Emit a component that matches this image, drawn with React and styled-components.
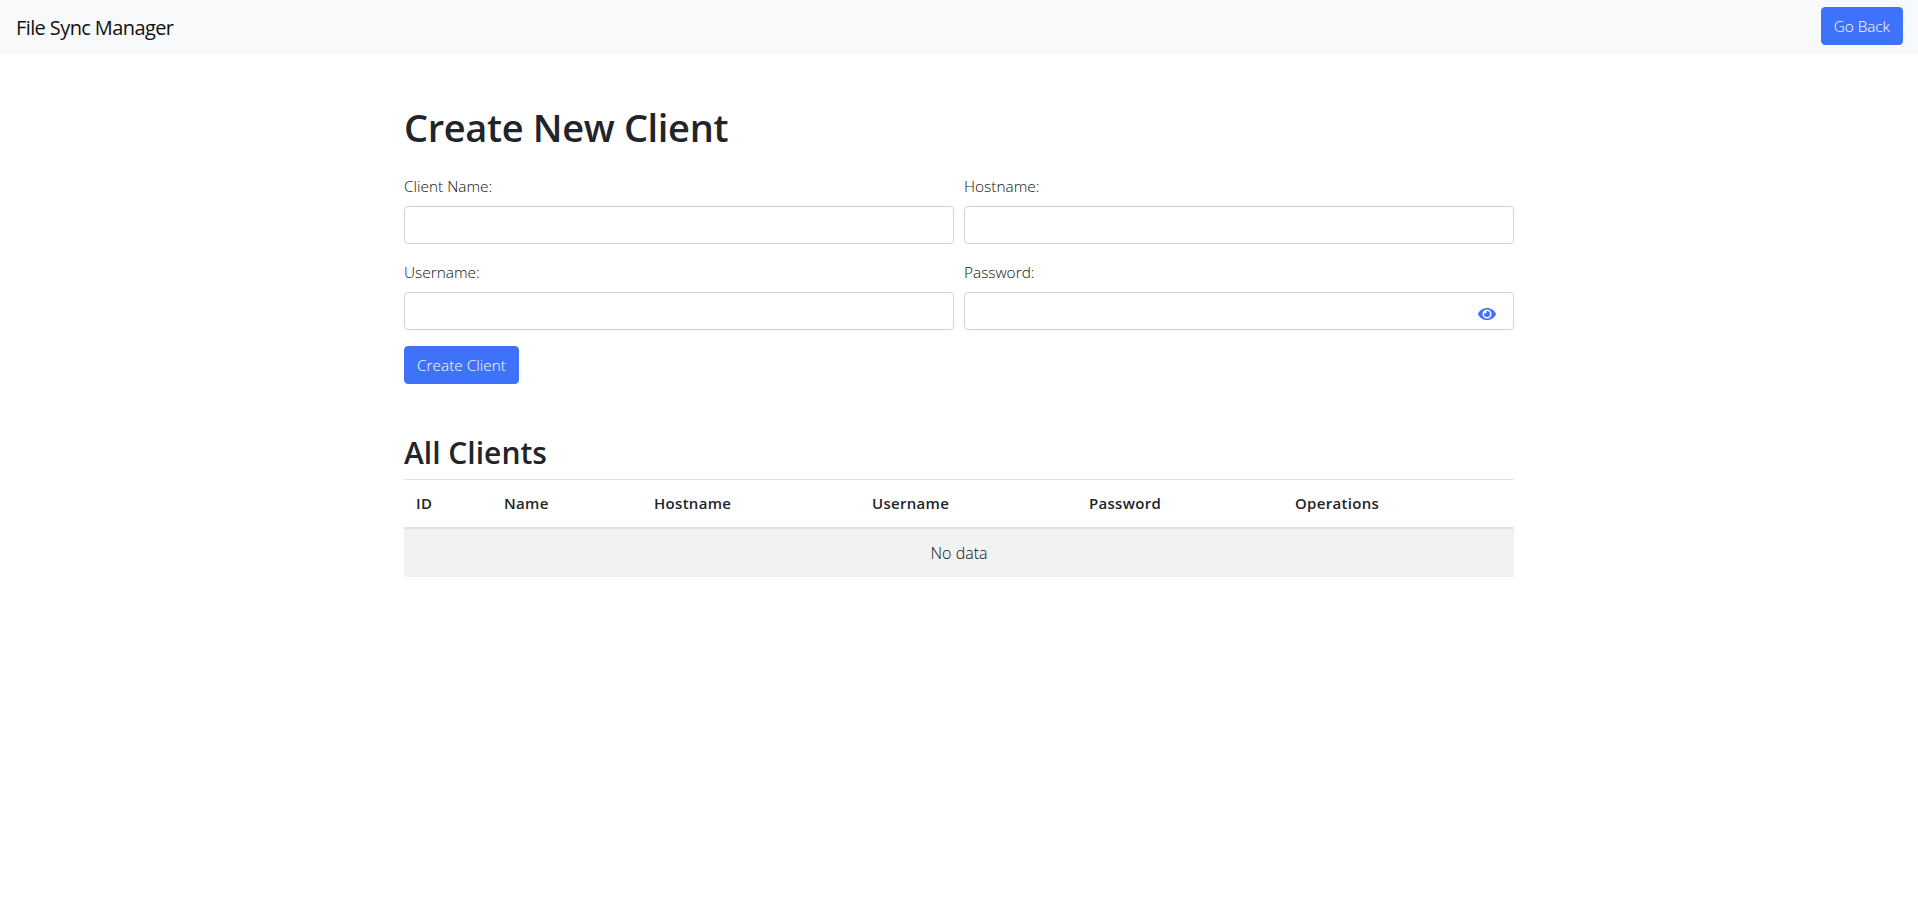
import { createGlobalStyle } from 'styled-components'
import styled from 'styled-components'
import { FaEye } from 'react-icons/fa'

const GlobalStyle = createGlobalStyle`
    * { box-sizing: border-box; }
    body {
        margin: 0;
        background: #fff;
        color: #212529;
        font-family: "Open Sans", "Noto Sans", sans-serif;
        font-size: 16px;
        line-height: 1.5;
    }
`

const Navbar = styled.nav`
    display: flex;
    align-items: center;
    justify-content: space-between;
    height: 54px;
    padding: 7px 15px 9px 16px;
    background: #f8f9fa;
`
const Brand = styled.span`
    padding-top: 3px;
    font-size: 20px;
    letter-spacing: -0.6px;
    color: #111;
`
const Button = styled.button`
    height: 38px;
    padding: 0 12px;
    border: 1px solid #3f72fb;
    border-radius: 4px;
    background: #3f72fb;
    color: #fff;
    font-family: inherit;
    font-size: ${p => p.$size || 15.4}px;
    font-weight: 300;
`
const Container = styled.main`
    width: 1110px;
    margin: 0 auto;
    padding-top: 47px;
`
const Title = styled.h1`
    margin: 0 0 21px;
    font-size: 38px;
    font-weight: 600;
    line-height: 53px;
    letter-spacing: -0.35px;
`
const FormGrid = styled.form`
    display: grid;
    grid-template-columns: 1fr 1fr;
    column-gap: 10px;
    row-gap: 17px;
    margin-bottom: 16px;
`
const Field = styled.div`
    display: flex;
    flex-direction: column;
    gap: 7px;
`
const Label = styled.label`
    font-size: 15.4px;
    font-weight: 300;
    line-height: 24px;
    color: #111;
`
const InputWrap = styled.div`
    position: relative;
`
const Input = styled.input`
    display: block;
    width: 100%;
    height: 38px;
    padding: 6px 12px;
    border: 1px solid #ced4da;
    border-radius: 4px;
    background: #fff;
`
const EyeToggle = styled.span`
    position: absolute;
    top: 13px;
    right: 18px;
    display: flex;
    color: #3f72fb;
    font-size: 18px;
`
const SectionTitle = styled.h2`
    margin: 48px 0 5px;
    font-size: 30px;
    font-weight: 600;
    line-height: 42px;
`
const Table = styled.table`
    width: 100%;
    border-collapse: collapse;
    table-layout: fixed;
    border-top: 1px solid #dee2e6;
`
const Th = styled.th`
    width: ${p => p.$width}px;
    height: 48px;
    padding: 0 12px;
    border-bottom: 2px solid #dee2e6;
    text-align: left;
    font-size: 15px;
    font-weight: 600;
    letter-spacing: 0.3px;
    color: #212529;
`
const EmptyCell = styled.td`
    height: 49px;
    background: #f2f2f2;
    text-align: center;
    font-size: 16px;
    font-weight: 300;
    color: #111;
`

const columns = [
    { title: 'ID', width: 88 },
    { title: 'Name', width: 150 },
    { title: 'Hostname', width: 218 },
    { title: 'Username', width: 217 },
    { title: 'Password', width: 206 },
    { title: 'Operations', width: 231 },
]

export default function App() {
    return (
        <>
            <GlobalStyle />
            <Navbar>
                <Brand>File Sync Manager</Brand>
                <Button type="button" $size={15.3}>Go Back</Button>
            </Navbar>
            <Container>
                <Title>Create New Client</Title>
                <FormGrid>
                    <Field>
                        <Label>Client Name:</Label>
                        <Input type="text" />
                    </Field>
                    <Field>
                        <Label>Hostname:</Label>
                        <Input type="text" />
                    </Field>
                    <Field>
                        <Label>Username:</Label>
                        <Input type="text" />
                    </Field>
                    <Field>
                        <Label>Password:</Label>
                        <InputWrap>
                            <Input type="password" />
                            <EyeToggle><FaEye /></EyeToggle>
                        </InputWrap>
                    </Field>
                </FormGrid>
                <Button type="button">Create Client</Button>
                <SectionTitle>All Clients</SectionTitle>
                <Table>
                    <thead>
                        <tr>
                            {columns.map(c => <Th key={c.title} $width={c.width}>{c.title}</Th>)}
                        </tr>
                    </thead>
                    <tbody>
                        <tr>
                            <EmptyCell colSpan={columns.length}>No data</EmptyCell>
                        </tr>
                    </tbody>
                </Table>
            </Container>
        </>
    )
}
